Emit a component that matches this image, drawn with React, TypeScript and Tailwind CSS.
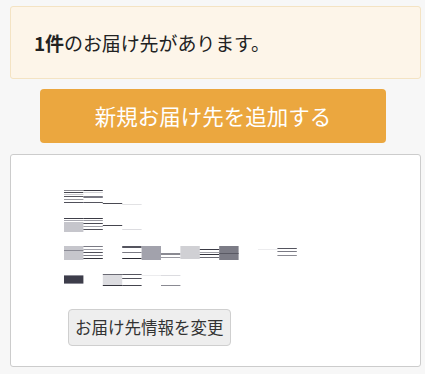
type Stripe = [number, number, string]; // y offset, height, colour
type Cell = Stripe[];

const W = 19.4;

// redacted address lines, drawn as blurred mosaic cells
const LINES: Cell[][] = [
  [
    [[0, 1, "#8a8a92"], [2, 1, "#4a4a52"], [4, 1, "#c8c8cc"], [6, 1, "#55555d"], [9, 1, "#9a9aa0"], [12, 1, "#50505a"]],
    [[0, 1, "#3a3a44"], [2, 1, "#d0d0d4"], [6, 2, "#7a7a84"], [12, 1, "#55555e"]],
    [[13, 1, "#4a4a52"]],
    [[14, 1, "#e2e2e4"]],
  ],
  [
    [[0, 1, "#40404a"], [2, 1, "#a8a8b0"], [4, 10, "#c6c6cc"]],
    [[0, 1, "#3a3a44"], [2, 1, "#9a9aa2"], [5, 1, "#4a4a54"], [8, 1, "#a0a0a8"], [11, 1, "#50505a"]],
    [[7, 1, "#45454e"]],
    [[11, 1, "#dcdce0"]],
  ],
  [
    [[0, 14, "#c6c6cc"], [4, 1, "#8a8a94"]],
    [[0, 1, "#7a7a84"], [3, 1, "#a0a0a8"], [6, 1, "#50505a"], [9, 1, "#7a7a84"], [12, 1, "#33333c"]],
    [],
    [[0, 2, "#55555f"], [6, 1, "#7a7a84"], [12, 1, "#2a2a33"]],
    [[0, 14, "#a2a2ac"]],
    [[7, 2, "#8a8a92"], [11, 1, "#9a9aa2"]],
    [[0, 13, "#d0d0d4"]],
    [[3, 1, "#3a3a44"], [6, 1, "#a0a0a8"], [8, 1, "#33333c"], [11, 1, "#6a6a74"]],
    [[0, 14, "#7c7c86"], [7, 1, "#5a5a64"]],
    [],
    [[3, 1, "#ececee"]],
    [[2, 1, "#55555f"], [5, 1, "#7a7a84"], [9, 1, "#8a8a92"]],
  ],
  [
    [[1, 1, "#8a8a94"], [2, 7, "#3d3d4a"], [9, 1, "#8a8a94"]],
    [],
    [[0, 1, "#6a6a74"], [1, 10, "#dcdce0"], [11, 1, "#33333c"]],
    [[0, 1, "#55555f"], [4, 1, "#50505a"], [11, 1, "#44444d"]],
    [[1, 1, "#ececee"]],
    [[1, 1, "#dcdce0"], [11, 1, "#8a8a92"]],
  ],
];

function MaskLine({ cells }: { cells: Cell[] }) {
  return (
    <svg width={W * 12} height={15} className="block">
      {cells.map((cell, i) =>
        cell.map(([y, h, c], j) => (
          <rect key={`${i}-${j}`} x={i * W} y={y} width={W} height={h} fill={c} />
        ))
      )}
    </svg>
  );
}

export default function App() {
  return (
    <div
      className="min-h-[374px] bg-[#f7f7f7] pl-[10px] pr-[4px] pt-[6px] pb-[7px] text-[#222]"
      style={{ fontFamily: '"Noto Sans CJK JP", "Noto Sans", sans-serif' }}
    >
      {/* notice */}
      <div className="h-[73px] rounded-[3px] border border-[#f4e3c3] bg-[#fdf5e9] pl-[23px] flex items-center">
        <p className="text-[19px] leading-none tracking-[-0.1px] text-[#222]">
          <b className="font-bold">1件</b>のお届け先があります。
        </p>
      </div>

      {/* add button */}
      <button className="mt-[10px] ml-[30px] flex h-[54px] w-[346px] items-center justify-center rounded-[4px] bg-[#eba73f] text-[21.5px] text-white">
        新規お届け先を追加する
      </button>

      {/* address card */}
      <div className="mt-[11px] h-[213px] rounded-[3px] border border-[#cccccc] bg-white pl-[53px] pt-[35px]">
        <div className="flex flex-col gap-[13px]">
          {LINES.map((l, i) => (
            <MaskLine key={i} cells={l} />
          ))}
        </div>
        <button className="mt-[20px] ml-[4px] h-[37px] rounded-[4px] border border-[#cfcfcf] bg-[#eeeeee] px-[6px] text-[16.5px] text-[#333]">
          お届け先情報を変更
        </button>
      </div>
    </div>
  );
}
